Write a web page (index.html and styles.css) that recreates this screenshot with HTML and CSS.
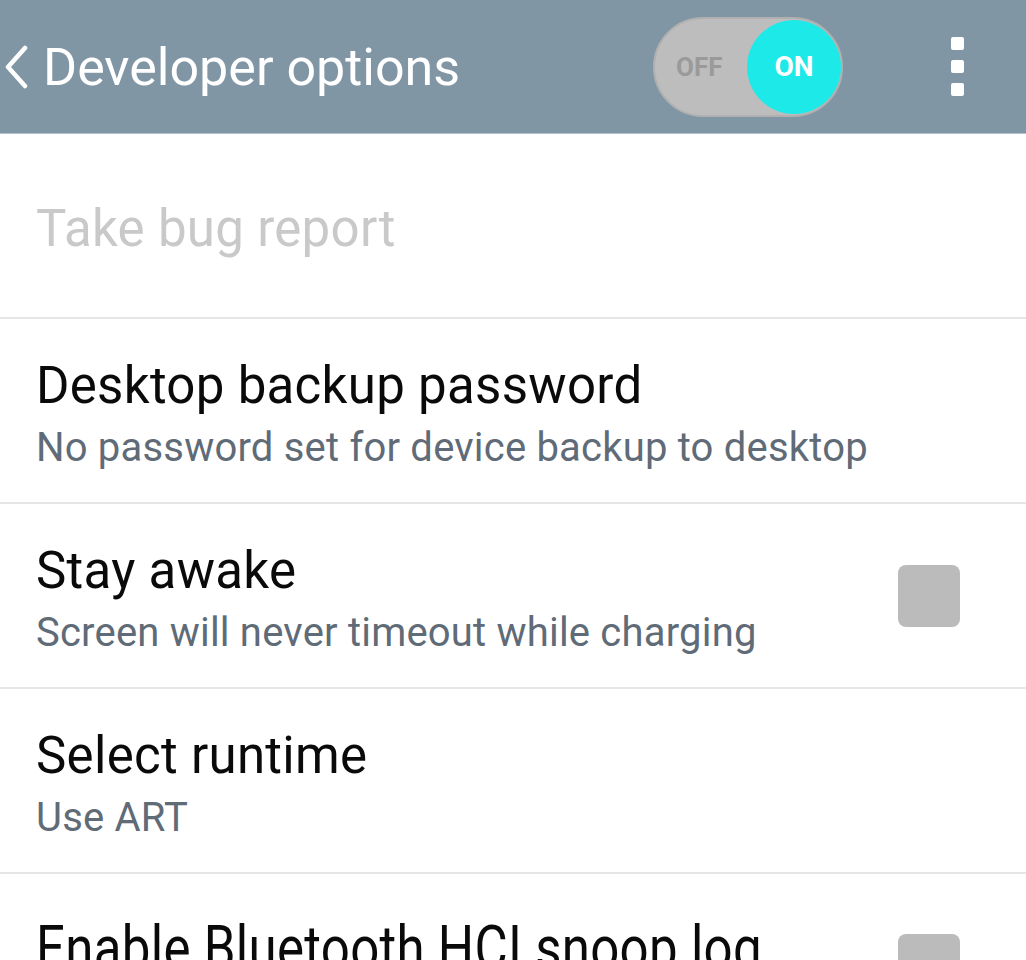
FILE: index.html
```html
<!DOCTYPE html>
<html>
<head>
<meta charset="utf-8">
<link rel="stylesheet" href="styles.css">
</head>
<body>
<div class="screen">
  <header class="appbar">
    <div class="back">
      <svg class="chev" width="26" height="44" viewBox="0 0 26 44"><path d="M22 3 L5 22 L22 41" fill="none" stroke="#fff" stroke-width="4.5" stroke-linecap="round" stroke-linejoin="round"/></svg>
      <span class="appbar-title">Developer options</span>
    </div>
    <div class="toggle">
      <span class="off">OFF</span>
      <span class="knob">ON</span>
    </div>
    <div class="menu">
      <span class="dot"></span><span class="dot"></span><span class="dot"></span>
    </div>
  </header>
  <ul class="list">
    <li class="row disabled"><div class="texts"><div class="title">Take bug report</div></div></li>
    <li class="row"><div class="texts"><div class="title">Desktop backup password</div><div class="sub">No password set for device backup to desktop</div></div></li>
    <li class="row"><div class="texts"><div class="title">Stay awake</div><div class="sub">Screen will never timeout while charging</div></div><span class="check"></span></li>
    <li class="row"><div class="texts"><div class="title">Select runtime</div><div class="sub">Use ART</div></div></li>
    <li class="row last"><div class="texts"><div class="title tall">Enable Bluetooth HCI snoop log</div></div><span class="check"></span></li>
  </ul>
</div>
</body>
</html>
```

FILE: styles.css
```css
html, body {
  margin: 0;
  padding: 0;
  background: #fff;
}
body {
  font-family: Roboto, "Noto Sans", sans-serif;
  width: 1026px;
  height: 960px;
  overflow: hidden;
}
.screen {
  width: 1026px;
}
.appbar {
  height: 134px;
  background: #8196a5;
  border-bottom: 1px solid #b3c0c9;
  display: flex;
  align-items: center;
  box-sizing: border-box;
}
.back {
  display: flex;
  align-items: center;
  padding-left: 3px;
  flex: 1;
}
.chev {
  display: block;
  margin-right: 14px;
}
.appbar-title {
  color: #fff;
  font-size: 52px;
  line-height: 1;
  margin-top: 2px;
}
.toggle {
  width: 190px;
  height: 100px;
  box-sizing: border-box;
  border-radius: 50px;
  background: #bdbdbd;
  border: 2px solid #b0b0b0;
  display: flex;
  align-items: center;
  justify-content: space-between;
  padding: 0 0 0 21px;
}
.off {
  color: #9a9a9a;
  font-weight: 700;
  font-size: 26px;
}
.knob {
  width: 94px;
  height: 94px;
  border-radius: 50%;
  background: #1ee9e9;
  color: #fff;
  font-weight: 700;
  font-size: 28px;
  display: flex;
  align-items: center;
  justify-content: center;
}
.menu {
  width: 183px;
  display: flex;
  flex-direction: column;
  align-items: center;
  gap: 10px;
  padding-left: 46px;
  box-sizing: border-box;
}
.dot {
  width: 13px;
  height: 13px;
  background: #fff;
  border-radius: 2px;
}
.list {
  list-style: none;
  margin: 0;
  padding: 0;
}
.row {
  height: 183px;
  border-bottom: 2px solid #e6e6e6;
  display: flex;
  align-items: center;
  padding: 0 66px 0 36px;
}
.texts {
  flex: 1;
  padding-top: 7px;
}
.title {
  font-size: 51px;
  line-height: 58px;
  color: #0a0a0a;
  letter-spacing: 0.3px;
}
.sub {
  font-size: 40px;
  line-height: 48px;
  color: #5f6b77;
  margin-top: 9px;
  letter-spacing: 0.2px;
}
.disabled .texts {
  padding-top: 6px;
}
.disabled .title {
  color: #c9c9c9;
}
.check {
  width: 62px;
  height: 62px;
  border-radius: 8px;
  background: #bbbbbb;
  flex: none;
}
.last {
  align-items: flex-start;
  padding-top: 60px;
  height: 123px;
}
.last .texts {
  padding-top: 0;
}
.tall {
  transform: scaleY(1.2);
  transform-origin: left top;
  white-space: nowrap;
  margin-top: -20px;
}
```
